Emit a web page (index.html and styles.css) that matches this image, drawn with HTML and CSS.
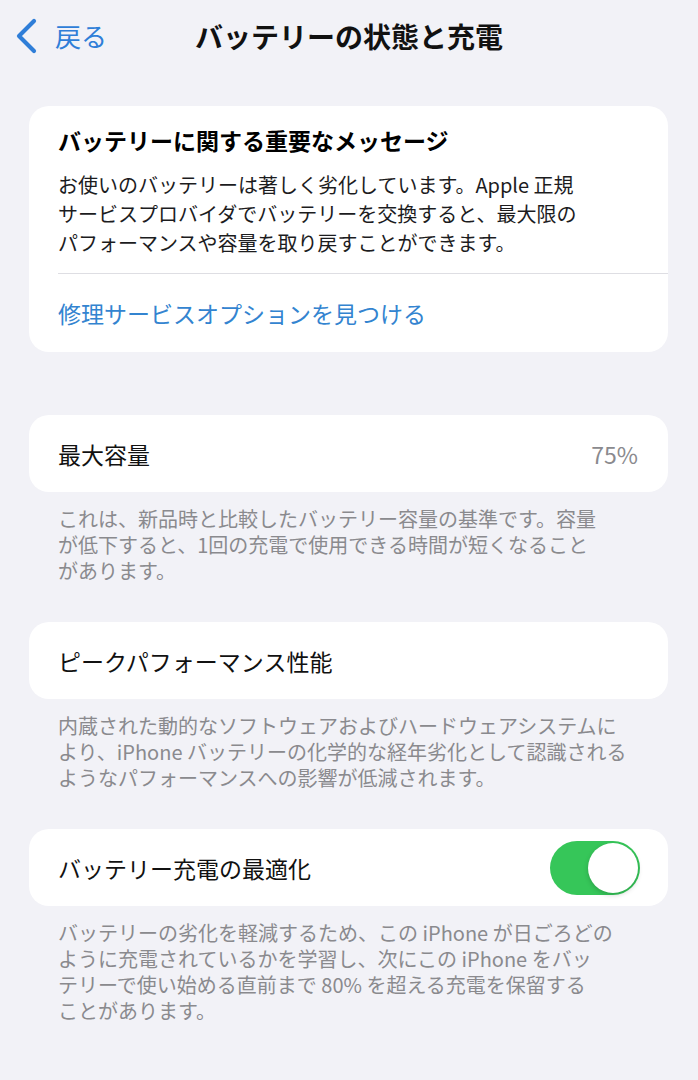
FILE: index.html
```html
<!DOCTYPE html>
<html lang="ja">
<head>
  <meta charset="UTF-8" />
  <meta name="viewport" content="width=device-width, initial-scale=1.0"/>
  <title>バッテリーの状態と充電</title>
  <link rel="stylesheet" href="styles.css">
</head>
<body>
  <header class="topbar">
    <a href="#" class="back">
      <svg class="chevron" width="24" height="38" viewBox="0 0 24 38">
        <polyline points="20,4 5,19 20,34" fill="none" stroke="#2f7ed8" stroke-width="4.2" stroke-linecap="round" stroke-linejoin="round"/>
      </svg>
      <span>戻る</span>
    </a>
    <h1>バッテリーの状態と充電</h1>
    <div></div>
  </header>

  <main class="content">
    <section class="group group-first">
      <div class="card">
        <div class="message">
          <h2>バッテリーに関する重要なメッセージ</h2>
          <p>お使いのバッテリーは著しく劣化しています。Apple 正規<br>サービスプロバイダでバッテリーを交換すると、最大限の<br>パフォーマンスや容量を取り戻すことができます。</p>
        </div>
        <a href="#" class="link-row">修理サービスオプションを見つける</a>
      </div>
    </section>

    <section class="group">
      <div class="card row">
        <span class="label">最大容量</span>
        <span class="value">75%</span>
      </div>
      <p class="note">これは、新品時と比較したバッテリー容量の基準です。容量<br>が低下すると、1回の充電で使用できる時間が短くなること<br>があります。</p>
    </section>

    <section class="group">
      <div class="card row">
        <span class="label">ピークパフォーマンス性能</span>
      </div>
      <p class="note">内蔵された動的なソフトウェアおよびハードウェアシステムに<br>より、iPhone バッテリーの化学的な経年劣化として認識される<br>ようなパフォーマンスへの影響が低減されます。</p>
    </section>

    <section class="group">
      <div class="card row">
        <span class="label">バッテリー充電の最適化</span>
        <span class="toggle on"><span class="knob"></span></span>
      </div>
      <p class="note">バッテリーの劣化を軽減するため、この iPhone が日ごろどの<br>ように充電されているかを学習し、次にこの iPhone をバッ<br>テリーで使い始める直前まで 80% を超える充電を保留する<br>ことがあります。</p>
    </section>
  </main>
</body>
</html>
```

FILE: styles.css
```css
body {
  margin: 0;
  font-family: "Noto Sans CJK JP", "Noto Sans", sans-serif;
  background-color: #f2f2f7;
  color: #000000;
}

.topbar {
  display: grid;
  grid-template-columns: 1fr auto 1fr;
  align-items: center;
  height: 72px;
}

.back {
  display: flex;
  align-items: center;
  gap: 17px;
  padding-left: 14px;
  color: #2f7ed8;
  text-decoration: none;
  font-size: 26px;
  line-height: 36px;
}

.chevron {
  display: block;
}

.topbar h1 {
  margin: 0;
  font-size: 28px;
  font-weight: 700;
  line-height: 36px;
  color: #111111;
}

.content {
  padding: 34px 30px 0 29px;
}

.group {
  margin-bottom: 38px;
}

.group-first {
  margin-bottom: 63px;
}

.card {
  background-color: #ffffff;
  border-radius: 20px;
}

.message {
  padding: 19px 30px 16px 29px;
}

.message h2 {
  margin: 0 0 15px;
  font-size: 23px;
  font-weight: 700;
  line-height: 30px;
}

.message p {
  margin: 0;
  font-size: 20px;
  line-height: 29px;
  color: #1c1c1e;
}

.link-row {
  display: block;
  margin-left: 29px;
  padding: 24px 0;
  border-top: 1px solid #dedee3;
  font-size: 23px;
  line-height: 30px;
  color: #3384d0;
  text-decoration: none;
}

.row {
  display: flex;
  align-items: center;
  justify-content: space-between;
  min-height: 77px;
  padding: 0 28px 0 29px;
  box-sizing: border-box;
}

.label {
  font-size: 23px;
  line-height: 30px;
  color: #111111;
}

.value {
  font-size: 23px;
  line-height: 30px;
  color: #8a8a8e;
  padding-right: 2px;
}

.note {
  margin: 14px 0 0;
  padding-left: 29px;
  font-size: 20px;
  line-height: 26px;
  color: #8a8a8e;
}

.toggle {
  display: flex;
  align-items: center;
  justify-content: flex-end;
  width: 90px;
  height: 54px;
  padding: 2px;
  box-sizing: border-box;
  border-radius: 27px;
  background-color: #e5e5ea;
}

.toggle.on {
  background-color: #36c659;
}

.knob {
  width: 50px;
  height: 50px;
  border-radius: 50%;
  background-color: #ffffff;
  box-shadow: 0 2px 5px rgba(0, 0, 0, 0.18);
}
```
